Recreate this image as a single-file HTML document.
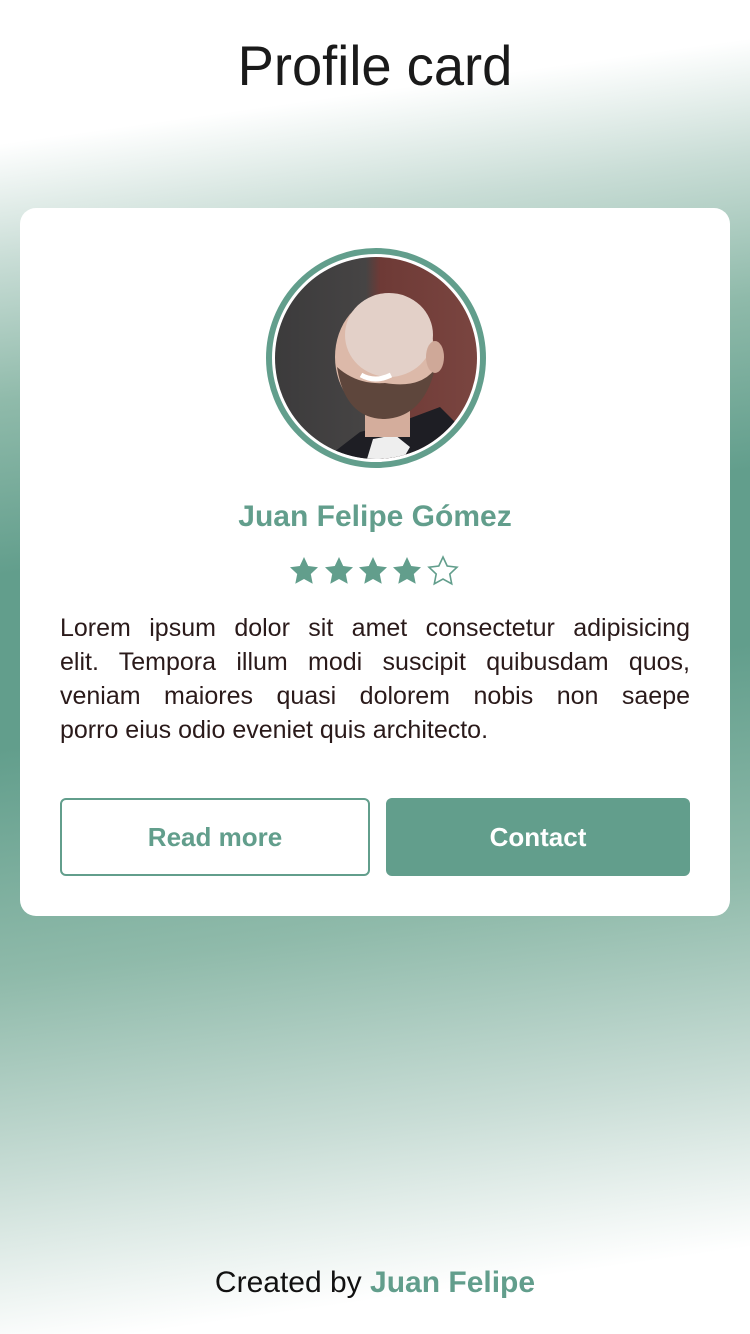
<!DOCTYPE html>
<html><head><meta charset="utf-8"><style>
*{margin:0;padding:0;box-sizing:border-box}
body{width:750px;height:1334px;overflow:hidden;font-family:"Liberation Sans",sans-serif;
background:linear-gradient(172deg,#fff 0%,#fff 10%,#c9ddd6 18%,#8fbaaa 28%,#629e8c 40%,#629e8c 52%,#8fbaaa 68%,#c9ddd6 82%,#fff 94%,#fff 100%);position:relative}
h1{position:absolute;top:33px;width:100%;text-align:center;font-weight:normal;font-size:56px;color:#1a1a1a;transform:scaleX(0.97)}
.card{position:absolute;left:20px;top:208px;width:710px;height:708px;background:#fff;border-radius:16px}
.av{position:absolute;left:246px;top:40px;width:220px;height:220px;border-radius:50%;border:6px solid #629e8c;padding:3px;background:#fff}
.ph{width:100%;height:100%;border-radius:50%;overflow:hidden;position:relative;
background:linear-gradient(90deg,#3c3b3c 0%,#464444 45%,#6e3a36 52%,#7a4540 100%)}
.name{position:absolute;top:292px;width:100%;text-align:center;color:#629e8c;font-weight:bold;font-size:30px}
.stars{position:absolute;top:347px;left:268px}
.txt{position:absolute;left:40px;top:403px;width:630px;font-size:25px;line-height:34px;color:#2a1a1a}
.txt div{text-align:justify;text-align-last:justify;white-space:nowrap}
.txt div.l{text-align-last:left}
.btn{position:absolute;top:590px;height:78px;border-radius:6px;font-weight:bold;font-size:26px;display:flex;align-items:center;justify-content:center}
.b1{left:40px;width:310px;border:2px solid #629e8c;color:#629e8c}
.b2{left:366px;width:304px;background:#629e8c;color:#fff}
.foot{position:absolute;top:1266px;width:100%;text-align:center;font-size:30px;color:#111}
.foot b{color:#629e8c}
</style></head><body>
<h1>Profile card</h1>
<div class="card">
<div class="av"><div class="ph">
<svg width="202" height="202" viewBox="0 0 202 202">
<path d="M50 202 L85 175 L125 165 L165 150 L185 170 L195 202Z" fill="#1e1e24"/>
<path d="M92 202 L98 182 L120 178 L135 190 L128 202Z" fill="#eee"/>
<rect x="90" y="130" width="45" height="50" fill="#d4ad9c"/>
<ellipse cx="110" cy="100" rx="50" ry="60" fill="#dcb9a9"/>
<ellipse cx="114" cy="78" rx="44" ry="42" fill="#e3d0c8"/>
<path d="M62 110 Q70 162 110 162 Q148 160 160 112 Q145 132 110 126 Q82 128 62 110Z" fill="#5e463c"/>
<path d="M86 118 Q100 126 116 118" stroke="#fff" stroke-width="5" fill="none"/>
<ellipse cx="160" cy="100" rx="9" ry="16" fill="#cfa898"/>
</svg></div></div>
<div class="name">Juan Felipe Gómez</div>
<div class="stars"><svg width="176" height="32" viewBox="0 0 176 32">
<defs><path id="s" d="M16 2 L20.2 11 L30 12.2 L22.8 19 L24.7 28.8 L16 24 L7.3 28.8 L9.2 19 L2 12.2 L11.8 11Z"/></defs>
<use href="#s" x="0" fill="#629e8c"/><use href="#s" x="35" fill="#629e8c"/><use href="#s" x="69" fill="#629e8c"/><use href="#s" x="103" fill="#629e8c"/>
<use href="#s" x="139" fill="#fff" stroke="#629e8c" stroke-width="1.6"/></svg></div>
<div class="txt"><div>Lorem ipsum dolor sit amet consectetur adipisicing</div><div>elit. Tempora illum modi suscipit quibusdam quos,</div><div>veniam maiores quasi dolorem nobis non saepe</div><div class="l">porro eius odio eveniet quis architecto.</div></div>
<div class="btn b1">Read more</div>
<div class="btn b2">Contact</div>
</div>
<div class="foot">Created by <b>Juan Felipe</b></div>
</body></html>
